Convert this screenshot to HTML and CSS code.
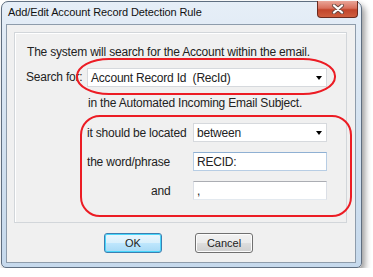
FILE: index.html
```html
<!DOCTYPE html>
<html lang="en">
<head>
    <meta charset="UTF-8">
    <meta name="viewport" content="width=device-width, initial-scale=1.0">
    <title>Add/Edit Account Record Detection Rule</title>
    <link rel="stylesheet" href="styles.css">
</head>
<body>
<div class="window">
    <div class="titlebar">
        <span class="title">Add/Edit Account Record Detection Rule</span>
        <div class="close">
            <svg width="14" height="10" viewBox="0 0 14 10">
                <path d="M3 1.5 L11 8.5 M11 1.5 L3 8.5" stroke="#6a4a44" stroke-width="4" stroke-linecap="round"/>
                <path d="M3 1.5 L11 8.5 M11 1.5 L3 8.5" stroke="#fff" stroke-width="2.2" stroke-linecap="round"/>
            </svg>
        </div>
    </div>

    <div class="client">
        <div class="group">
            <div class="intro">The system will search for the Account within the email.</div>

            <div class="search-row">
                <span class="search-label">Search for:</span>
                <div class="ellipse">
                    <div class="combo wide">
                        <span>Account Record Id&nbsp;&nbsp;(RecId)</span>
                        <i class="arrow"></i>
                    </div>
                </div>
            </div>

            <div class="subject">in the Automated Incoming Email Subject.</div>

            <div class="rule-box">
                <div class="rule-row">
                    <span class="rule-label">it should be located</span>
                    <div class="combo">
                        <span>between</span>
                        <i class="arrow"></i>
                    </div>
                </div>
                <div class="rule-row">
                    <span class="rule-label">the word/phrase</span>
                    <input class="field focused" type="text" value="RECID:">
                </div>
                <div class="rule-row">
                    <span class="rule-label and">and</span>
                    <input class="field" type="text" value=",">
                </div>
            </div>
        </div>

        <div class="buttons">
            <button class="btn default">OK</button>
            <button class="btn">Cancel</button>
        </div>
    </div>
</div>
</body>
</html>
```

FILE: styles.css
```css
* { box-sizing: border-box; }
body { margin: 0; background: #fff; font-family: "Liberation Sans", Arial, sans-serif; }

.window {
    margin: 1px 0 0 1px;
    width: 361px;
    height: 267px;
    border: 1px solid #5f6e80;
    border-radius: 7px 7px 5px 5px;
    background: linear-gradient(to bottom, #e6eef7 0%, #d8e5f2 35%, #c6d9ec 100%);
    box-shadow: 3px 4px 6px rgba(0, 0, 0, 0.4);
    display: flex;
    flex-direction: column;
}

.titlebar { height: 22px; display: flex; align-items: flex-start; }
.title { padding: 4px 0 0 6px; font-size: 11px; line-height: 13px; color: #111; letter-spacing: -0.1px; }
.close {
    margin-left: auto;
    margin-right: 3px;
    margin-top: -1px;
    width: 41px;
    height: 17px;
    border: 1px solid #6b2a1e;
    border-top: none;
    border-radius: 0 0 4px 4px;
    background: linear-gradient(to bottom, #e9a598 0%, #d9705c 45%, #c2452b 55%, #cf5e3f 100%);
    display: flex;
    align-items: center;
    justify-content: center;
}

.client {
    margin: 0 5px 4px 4px;
    flex: 1;
    border: 1px solid #8e9cab;
    background: #f0f0f0;
    padding: 7px 0 0 7px;
}

.group {
    width: 333px;
    height: 191px;
    border: 1px solid #d2d6da;
    box-shadow: inset 1px 1px 0 #fff;
    padding: 12px 0 0 12px;
    font-size: 12px;
    letter-spacing: -0.2px;
    color: #222;
}

.intro { line-height: 14px; margin-bottom: -1px; }

.search-row { display: flex; align-items: center; }
.search-label { width: 50px; white-space: nowrap; margin-left: -1px; }
.ellipse {
    border: 2px solid #ec1c24;
    border-radius: 33px / 18px;
    padding: 8px 7px 6px 9px;
    position: relative;
}

.combo {
    width: 134px;
    height: 19px;
    background: #fff;
    border: 1px solid #d6d9dd;
    display: flex;
    align-items: center;
    padding: 0 4px 0 3px;
}
.combo.wide { width: 240px; }
.combo span { flex: 1; white-space: pre; }
.arrow {
    width: 0;
    height: 0;
    border-left: 3.5px solid transparent;
    border-right: 3.5px solid transparent;
    border-top: 4px solid #000;
}

.subject { margin: 1px 0 0 61px; line-height: 14px; }

.rule-box {
    margin: 5px 0 0 53px;
    width: 272px;
    height: 102px;
    border: 2px solid #ec1c24;
    border-radius: 20px;
    padding: 6px 0 0 5px;
}
.rule-row { display: flex; align-items: center; height: 19px; margin-bottom: 10px; }
.rule-label { width: 106px; white-space: nowrap; }
.rule-label.and { padding-left: 64px; }

.field {
    width: 134px;
    height: 19px;
    margin: 0;
    padding: 0 3px;
    font: inherit;
    letter-spacing: inherit;
    color: #222;
    background: #fff;
    border: 1px solid #e3e9ef;
    border-top-color: #abadb3;
    border-left-color: #dbdfe6;
    border-right-color: #dbdfe6;
    outline: none;
}
.field.focused { border-color: #b7cde4; border-top-color: #8fb0d3; }

.buttons { display: flex; gap: 33px; padding: 10px 0 0 90px; }
.btn {
    width: 58px;
    height: 20px;
    padding: 0;
    font-family: "Liberation Sans", Arial, sans-serif;
    font-size: 11px;
    color: #222;
    border: 1px solid #707070;
    border-radius: 3px;
    background: linear-gradient(to bottom, #f2f2f2 0%, #ebebeb 48%, #dddddd 52%, #cfcfcf 100%);
    box-shadow: inset 0 0 0 1px #fcfcfc;
}
.btn.default {
    border-color: #3c7fb1;
    background: linear-gradient(to bottom, #eaf6fd 0%, #d9f0fc 48%, #bee6fd 52%, #a7d9f5 100%);
    box-shadow: inset 0 0 0 1px #48d6fb;
}
```
